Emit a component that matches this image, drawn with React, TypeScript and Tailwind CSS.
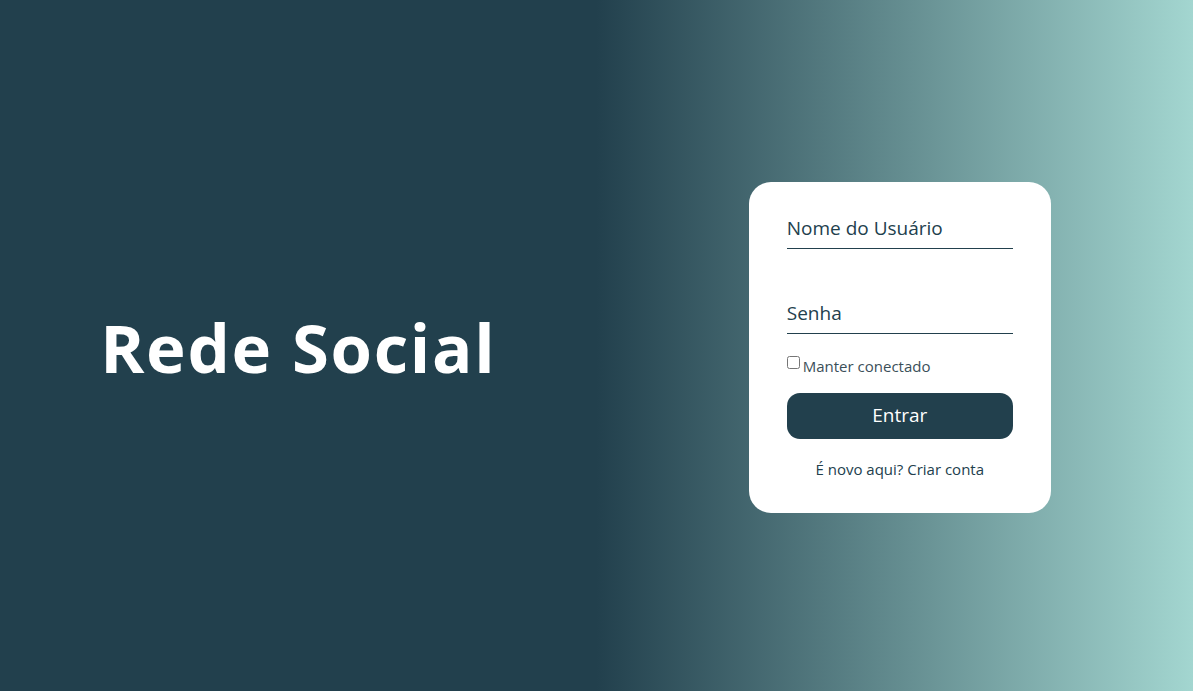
import React from "react";

export default function App() {
  const font = { fontFamily: '"Open Sans", "Noto Sans", sans-serif' };
  return (
    <div
      className="w-full h-[691px] grid grid-cols-2 items-center bg-[linear-gradient(to_right,#22404d_50%,#a3d6d0)]"
      style={font}
    >
      <div className="flex justify-center">
        <h1 className="text-white font-bold text-[67px] leading-none tracking-[1.7px] pt-[4px]">
          Rede Social
        </h1>
      </div>
      <div className="flex justify-center pl-[10px] pt-[3px]">
        <form className="w-[302px] rounded-[22px] bg-white px-[38px] pt-[26px] pb-[34px] flex flex-col">
          <input
            type="text"
            placeholder="Nome do Usuário"
            className="h-[41px] w-full border-b border-[#22404d] bg-transparent text-[19px] text-[#22404d] placeholder:text-[#22404d] outline-none"
          />
          <input
            type="password"
            placeholder="Senha"
            className="mt-[44px] h-[41px] w-full border-b border-[#22404d] bg-transparent text-[19px] text-[#22404d] placeholder:text-[#22404d] outline-none"
          />
          <label className="mt-[21px] flex items-start text-[15px] leading-[20px] text-[#3b4f59]">
            <input type="checkbox" className="m-0 mt-[1px] w-[13px] h-[13px]" />
            <span className="ml-[3px] mt-[1px]">Manter conectado</span>
          </label>
          <button
            type="button"
            className="mt-[17px] h-[46px] w-full rounded-[13px] bg-[#22404d] text-white text-[19px]"
          >
            Entrar
          </button>
          <p className="mt-[20px] text-center text-[15px] leading-[20px] text-[#22404d]">
            É novo aqui? Criar conta
          </p>
        </form>
      </div>
    </div>
  );
}
